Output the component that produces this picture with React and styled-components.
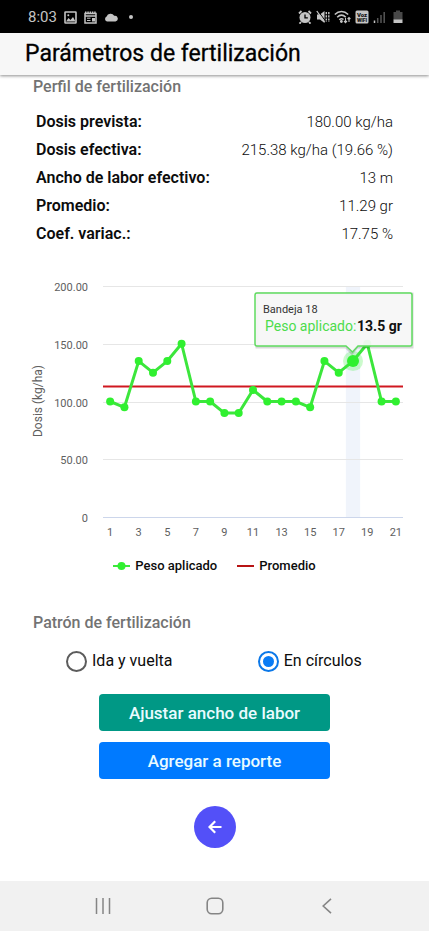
import React, { useState } from 'react';
import styled, { createGlobalStyle } from 'styled-components';

const GlobalStyle = createGlobalStyle`
  *, *::before, *::after { box-sizing: border-box; }
  body {
    margin: 0;
    background: #fff;
    color: #0c0c0c;
    font-family: Roboto, "Liberation Sans", sans-serif;
  }
`;

const Screen = styled.div`
  display: flex;
  flex-direction: column;
  min-height: 100vh;
`;

const StatusBar = styled.div`
  display: flex;
  align-items: center;
  justify-content: space-between;
  height: 33px;
  padding: 1px 24px 0 28px;
  background: #000;
  color: #c4c4c4;
`;

const StatusGroup = styled.div`
  display: flex;
  align-items: center;
  gap: ${({ $gap }) => $gap}px;
`;

const Clock = styled.span`
  font-size: 15px;
  line-height: 20px;
`;

const Header = styled.header`
  display: flex;
  align-items: center;
  height: 42px;
  padding: 0 25px;
  background: #f7f7f7;
  box-shadow: 0 1px 3px rgba(0, 0, 0, 0.45);
`;

const Title = styled.h1`
  margin: 0;
  font-size: 23px;
  line-height: 28px;
  font-weight: 400;
  color: #000;
  -webkit-text-stroke: 0.3px #000;
`;

const Content = styled.main`
  flex: 1;
  display: flex;
  flex-direction: column;
`;

const SectionTitle = styled.h2`
  margin: 0;
  padding: 2px 33px;
  font-size: 16px;
  line-height: 20px;
  font-weight: 500;
  color: #737373;
`;

const Summary = styled.dl`
  margin: 9px 0 0;
  padding: 0 36px;
`;

const SummaryRow = styled.div`
  display: flex;
  justify-content: space-between;
  line-height: 28px;
`;

const Term = styled.dt`
  font-size: 16px;
  font-weight: 600;
`;

const Value = styled.dd`
  margin: 0;
  font-size: 15px;
  font-weight: 300;
`;

const ChartFigure = styled.figure`
  margin: 22px 0 0;
`;

const ChartSvg = styled.svg`
  display: block;
  width: 100%;
  height: auto;
  font-family: Roboto, "Liberation Sans", sans-serif;
`;

const Legend = styled.figcaption`
  display: flex;
  justify-content: center;
  gap: 20px;
  padding-top: 13px;
`;

const LegendItem = styled.span`
  display: flex;
  align-items: center;
  gap: 5px;
  font-size: 13px;
  line-height: 16px;
  font-weight: 500;
`;

const PatternSection = styled.section`
  margin-top: 37px;
`;

const Options = styled.div`
  display: grid;
  grid-template-columns: 1fr 1fr;
  padding: 14px 24px 0;
`;

const Option = styled.label`
  display: flex;
  align-items: center;
  justify-content: center;
  gap: 5px;
  font-size: 16px;
  line-height: 24px;
`;

const Radio = styled.input`
  appearance: none;
  display: grid;
  place-items: center;
  width: 21px;
  height: 21px;
  margin: 0;
  border: 2px solid #5c5c5c;
  border-radius: 50%;

  &:checked {
    border-color: #0b78e8;
  }

  &:checked::before {
    content: '';
    width: 11px;
    height: 11px;
    border-radius: 50%;
    background: #0a7cf5;
  }
`;

const Actions = styled.div`
  display: flex;
  flex-direction: column;
  align-items: center;
  gap: 11px;
  padding: 21px 24px;
`;

const ActionButton = styled.button`
  width: 231px;
  height: 37px;
  padding: 0 16px;
  border: 0;
  border-radius: 4px;
  background: ${({ $tone }) => $tone};
  color: #e9fbff;
  font-family: inherit;
  font-size: 17px;
  line-height: 24px;
  font-weight: 500;
`;

const BackButton = styled.button`
  display: grid;
  place-items: center;
  width: 42px;
  height: 42px;
  margin-top: 16px;
  padding: 0;
  border: 0;
  border-radius: 50%;
  background: #5350f8;
`;

const NavBar = styled.nav`
  display: flex;
  align-items: center;
  justify-content: space-between;
  height: 50px;
  padding: 0 90px;
  background: #f1f1f1;
`;

const NavButton = styled.button`
  display: grid;
  place-items: center;
  width: 25px;
  height: 32px;
  padding: 0;
  border: 0;
  background: none;
`;

const summary = [
  ['Dosis prevista:', '180.00 kg/ha'],
  ['Dosis efectiva:', '215.38 kg/ha (19.66 %)'],
  ['Ancho de labor efectivo:', '13 m'],
  ['Promedio:', '11.29 gr'],
  ['Coef. variac.:', '17.75 %'],
];

const doses = [
  100, 95, 135, 125, 135, 150, 100, 100, 90, 90, 110,
  100, 100, 100, 95, 135, 125, 135, 150, 100, 100,
];
const average = 113;
const selected = 17;

const plot = { left: 103, right: 403, top: 16, bottom: 247 };
const step = (plot.right - plot.left) / doses.length;
const xOf = (i) => plot.left + (i + 0.5) * step;
const yOf = (v) => plot.bottom - (v / 200) * (plot.bottom - plot.top);

function StatusIcons() {
  return (
    <StatusGroup $gap={4}>
      <svg width="14" height="14" viewBox="0 0 14 14" fill="#c4c4c4" aria-hidden="true">
        <circle cx="7" cy="7.5" r="5.5" />
        <path d="M1 3.5 3.5 1M13 3.5 10.5 1M3 12l-1.5 1.7M11 12l1.5 1.7" stroke="#c4c4c4" strokeWidth="1.8" />
        <path d="M7 4.5v3.3h2.8" fill="none" stroke="#000" strokeWidth="1.3" />
      </svg>
      <svg width="14" height="14" viewBox="0 0 14 14" aria-hidden="true">
        <path d="M1 4.5h3L8.500 1v12L4 9.500H1z" fill="#c4c4c4" />
        <path d="M1.800 .8 9.500 11" stroke="#000" strokeWidth="1" />
        <path d="M.8 1 8.500 12" stroke="#c4c4c4" strokeWidth="1.300" />
        <path d="M10.300 2v10M12.800 2v10" fill="none" stroke="#c4c4c4" strokeWidth="1.400" strokeDasharray="2.200 1" />
      </svg>
      <svg width="17" height="14" viewBox="0 0 17 14" fill="none" stroke="#c4c4c4" strokeWidth="1.5" aria-hidden="true">
        <path d="M.8 4.5c4-4 9.400-4 13.400 0M3.200 7.200c2.600-2.500 6-2.500 8.600 0M5.300 9.700c1.500-1.300 2.900-1.300 4.200-.2" />
        <circle cx="7.400" cy="11.500" r=".7" fill="#c4c4c4" />
        <path d="M11.500 8v4.500M10 11l1.500 1.600L13 11M15 12V7.500M13.600 9 15 7.500 16.400 9" strokeWidth="1.100" />
      </svg>
      <svg width="14" height="14" viewBox="0 0 14 14" aria-hidden="true">
        <rect x=".5" y=".5" width="13" height="13" rx="1.500" fill="#c4c4c4" />
        <text x="7" y="6.500" textAnchor="middle" fontSize="6" fontWeight="900" fill="#111" fontFamily="Roboto, sans-serif">Voz</text>
        <text x="7" y="12.300" textAnchor="middle" fontSize="5" fontWeight="900" fill="#111" fontFamily="Roboto, sans-serif">WIFI</text>
      </svg>
      <svg width="13" height="14" viewBox="0 0 13 14" strokeWidth="1.500" aria-hidden="true">
        <path d="M1.500 13v-2.500" stroke="#c4c4c4" />
        <path d="M4.700 13V8M8 13V5M11.200 13V2" stroke="#555" />
      </svg>
      <svg width="15" height="14" viewBox="0 0 15 14" aria-hidden="true">
        <path d="M6 2V.5h4V2h2.500v8h-9V2z" fill="#484848" />
        <path d="M3.500 9.500h9V13h-9z" fill="#c4c4c4" />
      </svg>
    </StatusGroup>
  );
}

function DoseChart() {
  const points = doses.map((v, i) => `${xOf(i)},${yOf(v)}`).join(' ');
  return (
    <ChartSvg viewBox="0 0 429 275" role="img" aria-label="Dosis (kg/ha) por bandeja">
      <rect x={xOf(selected) - step / 2} y={plot.top} width={step} height={plot.bottom - plot.top} fill="#f0f4fb" />
      {[0, 50, 100, 150, 200].map((v) => (
        <g key={v}>
          <path
            d={`M${plot.left} ${Math.round(yOf(v)) + 0.5}H${plot.right}`}
            stroke={v === 0 ? '#ccd6eb' : '#e6e6e6'}
          />
          <text x="88" y={yOf(v) + 5} textAnchor="end" fontSize="11" fill="#606060">
            {v === 0 ? '0' : v.toFixed(2)}
          </text>
        </g>
      ))}
      <text transform="translate(42 131) rotate(-90)" textAnchor="middle" fontSize="12" fill="#606060">
        Dosis (kg/ha)
      </text>
      {doses.map((_, i) => i % 2 === 0 && (
        <text key={i} x={xOf(i)} y="266" textAnchor="middle" fontSize="11" fill="#606060">{i + 1}</text>
      ))}
      <path d={`M${plot.left} ${yOf(average)}H${plot.right}`} stroke="#d01820" strokeWidth="2" />
      <circle cx={xOf(selected)} cy={yOf(doses[selected])} r="10" fill="#32ee32" fillOpacity="0.25" />
      <polyline points={points} fill="none" stroke="#3ce63c" strokeWidth="3" strokeLinejoin="round" />
      {doses.map((v, i) => (
        <circle key={i} cx={xOf(i)} cy={yOf(v)} r={i === selected ? 6 : 4} fill="#30f030" />
      ))}
      <g>
        <path
          d="M257 24H412V77H357L352 83L346 77H257Z"
          fill="none" stroke="#000" strokeOpacity="0.15" strokeWidth="3"
        />
        <path
          d="M257 23H410Q412 23 412 25V74Q412 76 410 76H358L352.500 82L346 76H257Q255 76 255 74V25Q255 23 257 23Z"
          fill="#f7f7f7" fillOpacity="0.94" stroke="#5fdc5f" strokeWidth="1.500"
        />
        <text x="263" y="43" fontSize="11" fill="#333">Bandeja 18</text>
        <text x="265" y="61" fontSize="14" fill="#4cdc4c">Peso aplicado:</text>
        <text x="357" y="61" fontSize="14" fontWeight="700" fill="#111">13.5 gr</text>
      </g>
    </ChartSvg>
  );
}

export default function App() {
  const [pattern, setPattern] = useState('circulos');
  return (
    <Screen>
      <GlobalStyle />
      <StatusBar>
        <StatusGroup $gap={7}>
          <Clock>8:03</Clock>
          <svg width="13" height="13" viewBox="0 0 13 13" aria-hidden="true">
            <rect x="1" y="1" width="11" height="11" rx=".5" fill="none" stroke="#c4c4c4" strokeWidth="1.600" />
            <path d="M2 10.500 4.500 7l2 2L9 6l2.500 4.500z" fill="#c4c4c4" />
            <circle cx="4.300" cy="4.300" r="1" fill="#c4c4c4" />
          </svg>
          <svg width="13" height="13" viewBox="0 0 13 13" aria-hidden="true">
            <path d="M1 2.500h11V12H1zM1 5h11" fill="none" stroke="#c4c4c4" strokeWidth="1.500" />
            <path d="M1 1.500h11" stroke="#c4c4c4" strokeWidth="2" strokeDasharray="1.500 .8" />
            <path d="M3 7.200h3.500M3 9.500h3.500" stroke="#c4c4c4" />
            <path d="M8 7h3v3.500H8z" fill="#c4c4c4" />
          </svg>
          <svg width="14" height="13" viewBox="0 0 14 13" aria-hidden="true">
            <path d="M3 10.500A2.600 2.600 0 0 1 2.600 5.600 4.200 4.200 0 0 1 10.200 4.800 2.900 2.900 0 0 1 11.500 10.500z" fill="#c4c4c4" />
          </svg>
          <svg width="14" height="13" viewBox="0 0 14 13" aria-hidden="true">
            <circle cx="6" cy="6" r="2" fill="#c4c4c4" />
          </svg>
        </StatusGroup>
        <StatusIcons />
      </StatusBar>
      <Header>
        <Title>Parámetros de fertilización</Title>
      </Header>
      <Content>
        <section>
          <SectionTitle>Perfil de fertilización</SectionTitle>
          <Summary>
            {summary.map(([term, value]) => (
              <SummaryRow key={term}>
                <Term>{term}</Term>
                <Value>{value}</Value>
              </SummaryRow>
            ))}
          </Summary>
        </section>
        <ChartFigure>
          <DoseChart />
          <Legend>
            <LegendItem>
              <svg width="17" height="10" viewBox="0 0 17 10" aria-hidden="true">
                <path d="M0 5h17" stroke="#3ce63c" strokeWidth="2" />
                <circle cx="8.500" cy="5" r="4" fill="#30f030" />
              </svg>
              Peso aplicado
            </LegendItem>
            <LegendItem>
              <svg width="17" height="10" viewBox="0 0 17 10" aria-hidden="true">
                <path d="M0 5h17" stroke="#b81414" strokeWidth="2" />
              </svg>
              Promedio
            </LegendItem>
          </Legend>
        </ChartFigure>
        <PatternSection>
          <SectionTitle>Patrón de fertilización</SectionTitle>
          <Options role="radiogroup" aria-label="Patrón de fertilización">
            <Option>
              <Radio
                type="radio"
                name="pattern"
                checked={pattern === 'ida'}
                onChange={() => setPattern('ida')}
              />
              Ida y vuelta
            </Option>
            <Option>
              <Radio
                type="radio"
                name="pattern"
                checked={pattern === 'circulos'}
                onChange={() => setPattern('circulos')}
              />
              En círculos
            </Option>
          </Options>
        </PatternSection>
        <Actions>
          <ActionButton type="button" $tone="#009885">Ajustar ancho de labor</ActionButton>
          <ActionButton type="button" $tone="#007aff">Agregar a reporte</ActionButton>
          <BackButton type="button" aria-label="Volver">
            <svg width="14" height="14" viewBox="0 0 14 14" fill="none" stroke="#fff" strokeWidth="2.200" aria-hidden="true">
              <path d="M13.500 7H2M7.200 1.200 1.500 7l5.700 5.800" />
            </svg>
          </BackButton>
        </Actions>
      </Content>
      <NavBar aria-label="Sistema">
        <NavButton type="button" aria-label="Recientes">
          <svg width="16" height="16" viewBox="0 0 16 16" stroke="#858585" strokeWidth="1.500" aria-hidden="true">
            <path d="M1.500 0v16M8 0v16M14.500 0v16" />
          </svg>
        </NavButton>
        <NavButton type="button" aria-label="Inicio">
          <svg width="18" height="18" viewBox="0 0 18 18" fill="none" stroke="#858585" strokeWidth="1.600" aria-hidden="true">
            <rect x="1.200" y="1.200" width="15.600" height="15.600" rx="4.500" />
          </svg>
        </NavButton>
        <NavButton type="button" aria-label="Atrás">
          <svg width="10" height="16" viewBox="0 0 10 16" fill="none" stroke="#858585" strokeWidth="1.600" aria-hidden="true">
            <path d="M9 .8 1.200 8 9 15.200" />
          </svg>
        </NavButton>
      </NavBar>
    </Screen>
  );
}
